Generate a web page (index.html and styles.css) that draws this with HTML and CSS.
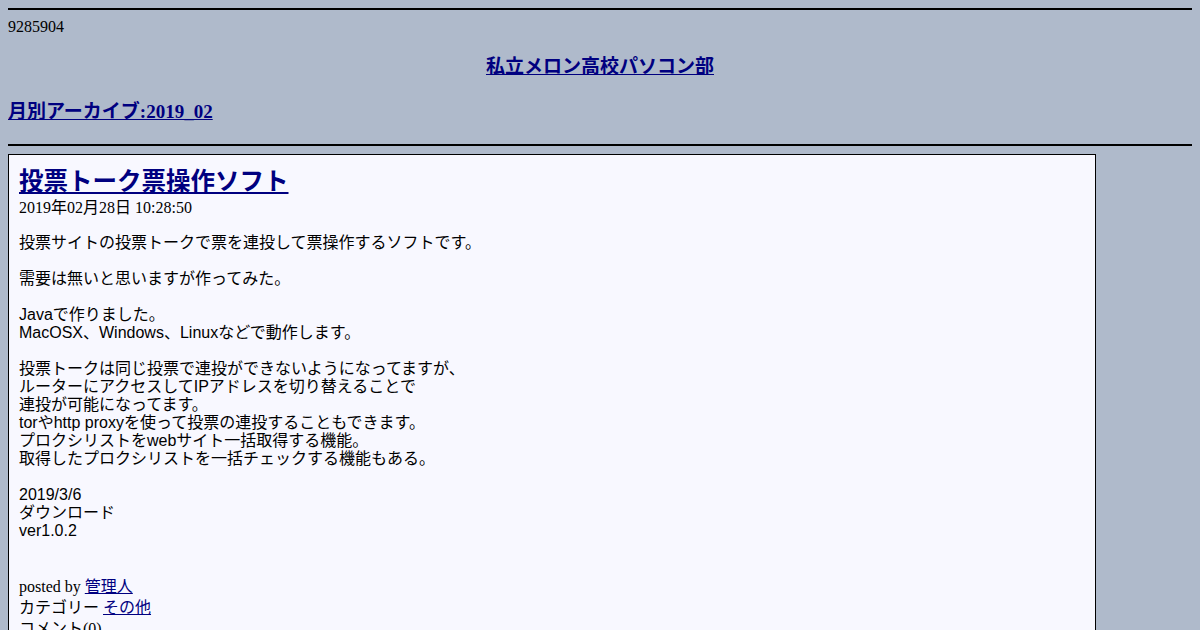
FILE: index.html
```html
<!DOCTYPE html>
<html lang="ja">

<head>
  <meta charset="UTF-8">
  <title>月別アーカイブ:2019_02 - 私立メロン高校パソコン部</title>
  <link rel="stylesheet" href="styles.css">
</head>

<body>
  <div class="rule"></div>
  <div class="counter">9285904</div>

  <h1 class="site-title"><a href="#">私立メロン高校パソコン部</a></h1>
  <h2 class="archive-title"><a href="#">月別アーカイブ:2019_02</a></h2>

  <div class="rule rule-bottom"></div>

  <div class="entry">
    <h3 class="entry-title"><a href="#">投票トーク票操作ソフト</a></h3>
    <div class="entry-date">2019年02月28日 10:28:50</div>

    <div class="entry-body">
      投票サイトの投票トークで票を連投して票操作するソフトです。<br>
      <br>
      需要は無いと思いますが作ってみた。<br>
      <br>
      Javaで作りました。<br>
      MacOSX、Windows、Linuxなどで動作します。<br>
      <br>
      投票トークは同じ投票で連投ができないようになってますが、<br>
      ルーターにアクセスしてIPアドレスを切り替えることで<br>
      連投が可能になってます。<br>
      torやhttp proxyを使って投票の連投することもできます。<br>
      プロクシリストをwebサイト一括取得する機能。<br>
      取得したプロクシリストを一括チェックする機能もある。<br>
      <br>
      2019/3/6<br>
      ダウンロード<br>
      ver1.0.2
    </div>

    <div class="entry-footer">
      <div>posted by <a href="#">管理人</a></div>
      <div>カテゴリー <a href="#">その他</a></div>
      <div>コメント(0)</div>
    </div>
  </div>
</body>

</html>
```

FILE: styles.css
```css
body {
  margin: 8px;
  background: #afbacb;
  color: #000;
  font-family: "Liberation Serif", "Noto Sans CJK JP", serif;
  font-size: 16px;
}

a {
  color: #000080;
}

.rule {
  border-top: 2px solid #000;
}

.counter {
  margin-top: 8px;
  line-height: 18px;
}

.site-title {
  margin: 19px 0 0;
  font-size: 19px;
  line-height: 24px;
  text-align: center;
}

.archive-title {
  margin: 21px 0 0;
  font-size: 19px;
  line-height: 24px;
}

.rule-bottom {
  margin-top: 20px;
}

/* 記事 */
.entry {
  width: 1088px;
  box-sizing: border-box;
  margin-top: 8px;
  padding: 10px;
  border: 1px solid #000;
  background: #f8f8ff;
}

.entry-title {
  margin: 0;
  font-size: 24.5px;
  line-height: 33px;
}

.entry-date {
  line-height: 20px;
}

.entry-body {
  margin-top: 16px;
  font-family: "Liberation Sans", "Noto Sans CJK JP", sans-serif;
  line-height: 18px;
}

.entry-footer {
  margin-top: 36px;
  line-height: 21px;
}
```
